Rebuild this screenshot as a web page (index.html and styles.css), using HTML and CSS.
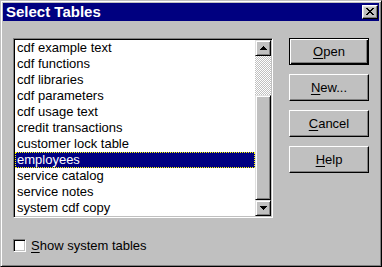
FILE: index.html
```html
<!DOCTYPE html>
<html>
<head>
<meta charset="utf-8">
<link rel="stylesheet" href="styles.css">
</head>
<body>
<div class="window">
  <div class="titlebar">
    <span class="title">Select Tables</span>
    <button class="close" aria-label="Close">
      <svg width="8" height="7" viewBox="0 0 8 7"><path d="M0 0h2v1h1v1h2v-1h1v-1h2v1h-1v1h-1v1h-1v1h1v1h1v1h1v1h-2v-1h-1v-1h-2v1h-1v1h-2v-1h1v-1h1v-1h1v-1h-1v-1h-1v-1h-1z" fill="#000"/></svg>
    </button>
  </div>
  <div class="body">
    <div class="left">
      <div class="listbox">
        <ul class="items">
          <li>cdf example text</li>
          <li>cdf functions</li>
          <li>cdf libraries</li>
          <li>cdf parameters</li>
          <li>cdf usage text</li>
          <li>credit transactions</li>
          <li>customer lock table</li>
          <li class="selected">employees</li>
          <li>service catalog</li>
          <li>service notes</li>
          <li>system cdf copy</li>
        </ul>
        <div class="scrollbar">
          <div class="sbtn"><svg width="7" height="4" viewBox="0 0 7 4"><path d="M3 0h1v1h1v1h1v1h1v1h-7v-1h1v-1h1v-1h1z" fill="#000"/></svg></div>
          <div class="track"></div>
          <div class="thumb"></div>
          <div class="sbtn"><svg width="7" height="4" viewBox="0 0 7 4"><path d="M0 0h7v1h-1v1h-1v1h-1v1h-1v-1h-1v-1h-1v-1h-1z" fill="#000"/></svg></div>
        </div>
      </div>
      <label class="check"><span class="box"></span><span><u>S</u>how system tables</span></label>
    </div>
    <div class="buttons">
      <button class="btn default"><u>O</u>pen</button>
      <button class="btn"><u>N</u>ew...</button>
      <button class="btn"><u>C</u>ancel</button>
      <button class="btn"><u>H</u>elp</button>
    </div>
  </div>
</div>
</body>
</html>
```
FILE: styles.css
```css
html, body {
  margin: 0;
  padding: 0;
  background: #c0c0c0;
}
.window {
  width: 382px;
  height: 267px;
  box-sizing: border-box;
  background: #c0c0c0;
  border: 1px solid;
  border-color: #c0c0c0 #000 #000 #c0c0c0;
  box-shadow: inset 1px 1px #fff, inset -1px -1px #808080;
  padding: 2px;
  font-family: "Liberation Sans", Arial, sans-serif;
  font-size: 13px;
  color: #000;
}
.titlebar {
  height: 18px;
  background: #000080;
  display: flex;
  align-items: center;
  justify-content: space-between;
  padding: 0 1px 0 3px;
}
.title {
  color: #fff;
  font-weight: bold;
  font-size: 15px;
  line-height: 18px;
}
.close {
  width: 16px;
  height: 14px;
  box-sizing: border-box;
  padding: 0;
  margin: 0;
  background: #c0c0c0;
  border: 1px solid;
  border-color: #fff #000 #000 #fff;
  box-shadow: inset -1px -1px #808080, inset 1px 1px #dfdfdf;
  display: flex;
  align-items: center;
  justify-content: center;
}
.close svg { display: block; margin-left: -1px; margin-top: -1px; }
.body {
  display: flex;
  gap: 16px;
  padding: 17px 0 0 10px;
}
.left {
  display: flex;
  flex-direction: column;
}
.listbox {
  width: 260px;
  height: 180px;
  box-sizing: border-box;
  border: 1px solid;
  border-color: #808080 #fff #fff #808080;
  box-shadow: inset 1px 1px #000, inset -1px -1px #c0c0c0;
  padding: 1px;
  background: #fff;
  display: flex;
}
.items {
  list-style: none;
  margin: 0;
  padding: 0;
  flex: 1;
  background: #fff;
}
.items li {
  height: 16px;
  line-height: 16px;
  padding-left: 2px;
  white-space: nowrap;
}
.items li.selected {
  background: #000080;
  color: #fff;
  outline: 1px dotted #ffff00;
  outline-offset: -1px;
}
.scrollbar {
  width: 16px;
  display: flex;
  flex-direction: column;
}
.sbtn, .thumb {
  box-sizing: border-box;
  background: #c0c0c0;
  border: 1px solid;
  border-color: #dfdfdf #000 #000 #dfdfdf;
  box-shadow: inset 1px 1px #fff, inset -1px -1px #808080;
}
.sbtn {
  height: 16px;
  display: flex;
  align-items: center;
  justify-content: center;
}
.sbtn svg { display: block; }
.track {
  height: 39px;
  background: repeating-conic-gradient(#fff 0 25%, #c0c0c0 0 50%) 0 0 / 2px 2px;
}
.thumb {
  height: 105px;
}
.check {
  display: flex;
  align-items: center;
  gap: 5px;
  margin-top: 21px;
  height: 13px;
}
.box {
  width: 13px;
  height: 13px;
  box-sizing: border-box;
  background: #fff;
  border: 1px solid;
  border-color: #808080 #fff #fff #808080;
  box-shadow: inset 1px 1px #000, inset -1px -1px #c0c0c0;
}
.buttons {
  display: flex;
  flex-direction: column;
  gap: 9px;
}
.btn {
  width: 80px;
  height: 27px;
  box-sizing: border-box;
  margin: 0;
  padding: 0;
  background: #c0c0c0;
  font-family: "Liberation Sans", Arial, sans-serif;
  font-size: 13px;
  color: #000;
  border: 1px solid;
  border-color: #fff #000 #000 #fff;
  box-shadow: inset -1px -1px #808080, inset 1px 1px #c0c0c0;
}
.btn.default {
  border-color: #000;
  box-shadow: inset 1px 1px #fff, inset -1px -1px #000, inset -2px -2px #808080;
}
u { text-decoration-thickness: 1px; text-underline-offset: 2px; }
```
